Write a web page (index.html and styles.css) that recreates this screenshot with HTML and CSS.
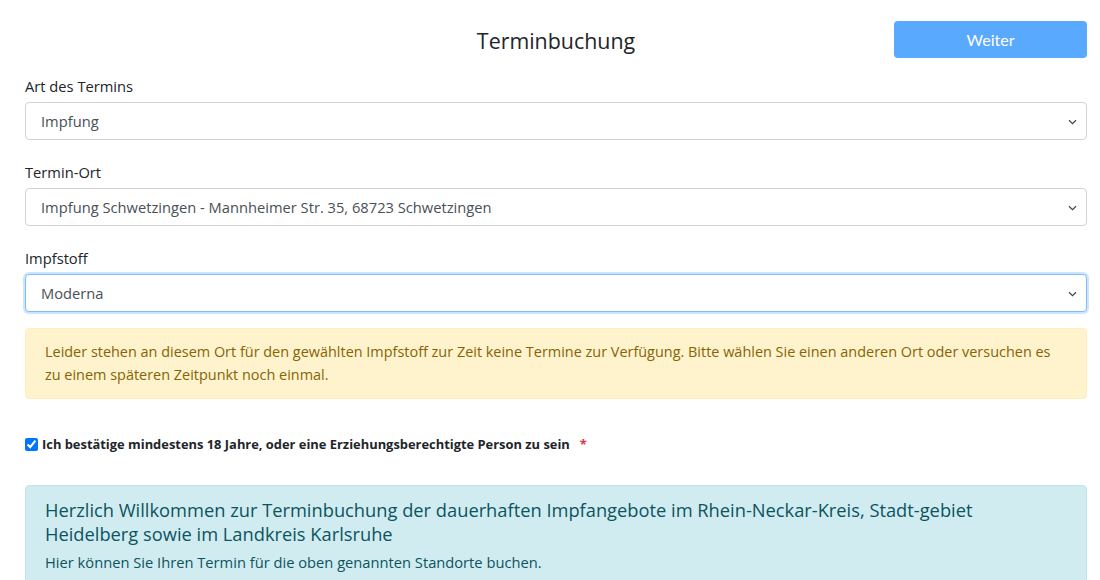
FILE: index.html
```html
<!DOCTYPE html>
<html lang="de">
<head>
<meta charset="utf-8">
<title>Terminbuchung</title>
<link rel="stylesheet" href="styles.css">
</head>
<body>
<div class="container">
  <div class="topbar">
    <div></div>
    <h4 class="title">Terminbuchung</h4>
    <button class="btn-primary" type="button">Weiter</button>
  </div>

  <div class="form">
    <div class="form-group">
      <label class="label">Art des Termins</label>
      <div class="select">
        <span>Impfung</span>
        <svg class="chev" width="9" height="6" viewBox="0 0 9 6"><path d="M1 1.2 L4.5 4.6 L8 1.2" fill="none" stroke="#444" stroke-width="1.2"/></svg>
      </div>
    </div>

    <div class="form-group">
      <label class="label">Termin-Ort</label>
      <div class="select">
        <span>Impfung Schwetzingen - Mannheimer Str. 35, 68723 Schwetzingen</span>
        <svg class="chev" width="9" height="6" viewBox="0 0 9 6"><path d="M1 1.2 L4.5 4.6 L8 1.2" fill="none" stroke="#444" stroke-width="1.2"/></svg>
      </div>
    </div>

    <div class="form-group">
      <label class="label">Impfstoff</label>
      <div class="select focused">
        <span>Moderna</span>
        <svg class="chev" width="9" height="6" viewBox="0 0 9 6"><path d="M1 1.2 L4.5 4.6 L8 1.2" fill="none" stroke="#444" stroke-width="1.2"/></svg>
      </div>
    </div>
  </div>

  <div class="alert-warning">
    Leider stehen an diesem Ort für den gewählten Impfstoff zur Zeit keine Termine zur Verfügung. Bitte wählen Sie einen anderen Ort oder versuchen es zu einem späteren Zeitpunkt noch einmal.
  </div>

  <div class="check">
    <input type="checkbox" checked class="check-input">
    <span class="check-label">Ich bestätige mindestens 18 Jahre, oder eine Erziehungsberechtigte Person zu sein</span>
    <span class="required">*</span>
  </div>

  <div class="alert-info">
    <h5 class="info-heading">Herzlich Willkommen zur Terminbuchung der dauerhaften Impfangebote im Rhein-Neckar-Kreis, Stadt-gebiet Heidelberg sowie im Landkreis Karlsruhe</h5>
    <p class="info-text">Hier können Sie Ihren Termin für die oben genannten Standorte buchen.</p>
  </div>
</div>
</body>
</html>
```
FILE: styles.css
```css
html, body {
  margin: 0;
  padding: 0;
  background: #fff;
}
body {
  font-family: "Open Sans", "Noto Sans", sans-serif;
  font-size: 14.7px;
  color: #212529;
  overflow: hidden;
}
.container {
  padding: 21px 13px 0 25px;
}
.topbar {
  display: grid;
  grid-template-columns: 1fr auto 1fr;
  align-items: start;
  height: 38px;
}
.title {
  margin: 0;
  font-size: 21.4px;
  font-weight: 400;
  color: #212529;
  line-height: 40px;
}
.btn-primary {
  justify-self: end;
  width: 193px;
  height: 37px;
  border: none;
  border-radius: 4px;
  background: #59a9ff;
  color: #fff;
  font-family: "Lato", "Open Sans", sans-serif;
  font-size: 16px;
  padding: 0;
}
.form {
  margin-top: 16px;
}
.form-group {
  margin-bottom: 21px;
}
.label {
  display: block;
  line-height: 23px;
  margin-bottom: 4px;
}
.select {
  height: 38px;
  box-sizing: border-box;
  border: 1px solid #ced4da;
  border-radius: 4px;
  display: flex;
  align-items: center;
  justify-content: space-between;
  padding: 0 9px 0 15px;
  color: #495057;
  background: #fff;
}
.select.focused {
  border-color: #80bdff;
  box-shadow: 0 0 0 2px rgba(0, 123, 255, 0.2);
}
.chev {
  display: block;
  margin-top: 1px;
}
.alert-warning {
  margin-top: -5px;
  background: #fff3cd;
  border: 1px solid #ffeeba;
  color: #856404;
  border-radius: 4px;
  padding: 11px 19px 12px;
  line-height: 23px;
  font-size: 14.45px;
}
.check {
  display: flex;
  align-items: center;
  margin-top: 35px;
  height: 20px;
}
.check-input {
  margin: 0 4px 0 0;
  width: 13px;
  height: 13px;
}
.check-label {
  font-size: 12.9px;
  font-weight: 700;
  color: #212529;
}
.required {
  color: #dc3545;
  font-weight: 700;
  font-size: 13px;
  margin-left: 10px;
}
.alert-info {
  margin-top: 31px;
  background: #d1ecf1;
  border: 1px solid #bee5eb;
  color: #0c5460;
  border-radius: 4px;
  padding: 12px 19px 20px;
}
.info-heading {
  margin: 0 0 4px;
  font-size: 18.3px;
  font-weight: 400;
  line-height: 24px;
}
.info-text {
  margin: 0;
  line-height: 24px;
}
```
